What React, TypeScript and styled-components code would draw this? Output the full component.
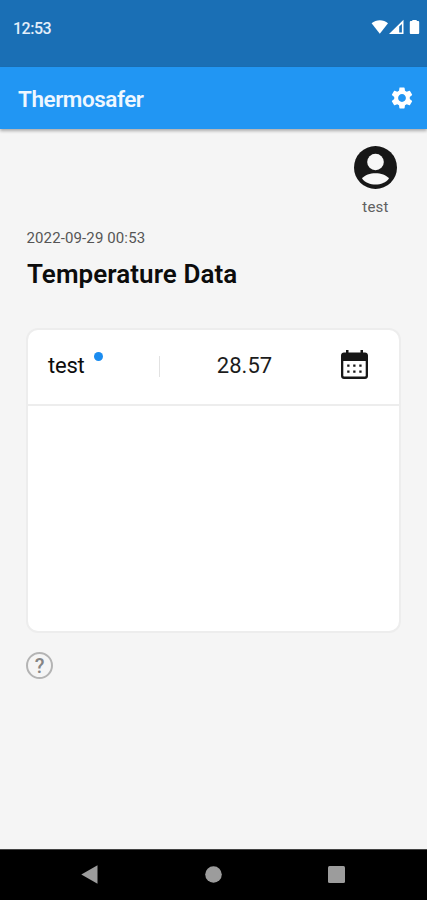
import React from "react";
import styled, { createGlobalStyle } from "styled-components";
import { MdSettings } from "react-icons/md";

const GlobalStyle = createGlobalStyle`
  *, *::before, *::after { box-sizing: border-box; }
  body { margin: 0; background: #f5f5f5; font-family: Roboto, sans-serif; }
  svg { display: block; flex: none; }
`;

const Screen = styled.div`
  display: flex;
  flex-direction: column;
  width: 427px;
  height: 900px;
  overflow: hidden;
  background: #f5f5f5;
  color: #0c0c0c;
`;

const StatusBar = styled.header`
  display: flex;
  justify-content: space-between;
  flex: none;
  height: 67px;
  padding: 19px 6px 0 13px;
  background: #1a6fb5;
`;

const Clock = styled.time`
  font-size: 16px;
  line-height: 19px;
  font-weight: 500;
  letter-spacing: -0.5px;
  color: #e3eefa;
`;

const AppBar = styled.div`
  display: flex;
  align-items: center;
  justify-content: space-between;
  flex: none;
  height: 62px;
  padding: 1px 12.5px 0 18px;
  background: #2196f3;
  color: #fff;
  box-shadow: 0 2px 3px rgba(0, 0, 0, 0.3);
`;

const AppTitle = styled.h1`
  margin: 0;
  font-size: 22.5px;
  line-height: 28px;
  font-weight: 600;
  letter-spacing: -0.45px;
  color: #eef7ff;
`;

const IconButton = styled.button`
  display: flex;
  padding: 0;
  border: 0;
  background: none;
  color: inherit;
`;

const SettingsButton = styled(IconButton)`
  margin-bottom: 1px;
`;

const Content = styled.main`
  display: flex;
  flex-direction: column;
  flex: 1;
  padding: 17px 26px 0;
`;

const Profile = styled.div`
  display: flex;
  flex-direction: column;
  align-items: center;
  align-self: flex-end;
  width: 51px;
  gap: 8px;
`;

const UserName = styled.span`
  font-size: 15px;
  line-height: 20px;
  letter-spacing: 0.2px;
  color: #606060;
`;

const Timestamp = styled.time`
  margin: 11px 0 0 0.5px;
  font-size: 15px;
  line-height: 20px;
  letter-spacing: 0.12px;
  color: #555;
`;

const Heading = styled.h2`
  margin: 10px 0 38px 1px;
  font-size: 26px;
  line-height: 32px;
  font-weight: 600;
  letter-spacing: 0.06px;
`;

const Card = styled.section`
  width: 375px;
  height: 305px;
  border: 2px solid #ededed;
  border-radius: 12px;
  background: #fff;
`;

const SensorRow = styled.div`
  display: grid;
  grid-template-columns: 132px 169px 1fr;
  align-items: center;
  height: 76px;
  padding-bottom: 2px;
  border-bottom: 2px solid #ededed;
`;

const SensorName = styled.div`
  display: flex;
  align-items: center;
  gap: 9px;
  height: 21px;
  padding-left: 20px;
  border-right: 1.5px solid #e2e2e2;
  font-size: 22px;
  line-height: 28px;
  letter-spacing: -0.2px;
`;

const OnlineDot = styled.span`
  width: 9px;
  height: 9px;
  margin-bottom: 19px;
  border-radius: 50%;
  background: #1a8cf0;
`;

const Reading = styled.div`
  text-align: center;
  font-size: 22px;
  line-height: 28px;
  color: #1c1c1c;
`;

const CalendarButton = styled(IconButton)`
  padding: 0 0 4px 12px;
`;

const HelpButton = styled.button`
  display: flex;
  align-items: center;
  justify-content: center;
  width: 27px;
  height: 27px;
  margin-top: 19px;
  padding: 0;
  border: 2px solid #b4b4b4;
  border-radius: 50%;
  background: none;
  color: #858585;
  font: 500 20px/24px Roboto, sans-serif;
`;

const NavBar = styled.nav`
  display: flex;
  align-items: center;
  justify-content: space-between;
  flex: none;
  height: 51px;
  padding: 0 82px 2px 81px;
  border-top: 1px solid #444;
  background: #000;
  color: #9c9c9c;
`;

const StatusIcons = () => (
  <svg width="50" height="16" viewBox="0 0 50 16" fill="#fff" aria-hidden="true">
    <path d="M.6 4.3C5.2.3 12.6.3 17 4.3L8.8 14.8Z" />
    <path fillRule="evenodd" d="M18 15 32.500 .8V15ZM28.200 7.500V13.400H30.900V4.900Z" />
    <path d="M41.3 1h4.400v1h1.300c.7 0 1.200.5 1.200 1.200v10.500c0 .8-.5 1.300-1.200 1.300h-7c-.7 0-1.200-.5-1.200-1.300V3.200c0-.7.5-1.200 1.200-1.200h1.300Z" />
  </svg>
);

const Avatar = () => (
  <svg width="43" height="43" viewBox="0 0 43 43" aria-hidden="true">
    <circle cx="21.500" cy="21.500" r="21.500" fill="#171717" />
    <circle cx="21.500" cy="16" r="8.300" fill="#f7f7f7" />
    <path d="M8 32.500C13.500 25.500 29.500 25.500 35 32.500 29 40.500 14 40.500 8 32.500Z" fill="#f7f7f7" />
  </svg>
);

const CalendarIcon = () => (
  <svg width="27" height="29" viewBox="0 0 27 29" fill="#171717" aria-hidden="true">
    <path
      fillRule="evenodd"
      d="M5 0h2.500v2.500h12V0H22v2.500h2c1.700 0 3 1.300 3 3V26c0 1.700-1.300 3-3 3H3c-1.700 0-3-1.300-3-3V5.500c0-1.700 1.300-3 3-3h2ZM2.300 11v14.600c0 .6.400 1 1 1h20.400c.6 0 1-.4 1-1V11Z"
    />
    <path d="M6.200 14.500h2.300v2.300H6.200ZM12.200 14.500h2.300v2.300h-2.300ZM18.300 14.500h2.300v2.300h-2.300ZM6.200 20.500h2.300v2.300H6.200ZM12.200 20.500h2.300v2.300h-2.300ZM18.300 20.500h2.300v2.300h-2.300Z" />
  </svg>
);

const BackIcon = () => (
  <svg width="17" height="19" viewBox="0 0 17 19" fill="currentColor" aria-hidden="true">
    <path d="M.3 9.500 16.500.3v18.400Z" />
  </svg>
);

const HomeIcon = () => (
  <svg width="17" height="17" viewBox="0 0 17 17" fill="currentColor" aria-hidden="true">
    <circle cx="8.500" cy="8.500" r="8.300" />
  </svg>
);

const RecentsIcon = () => (
  <svg width="17" height="17" viewBox="0 0 17 17" fill="currentColor" aria-hidden="true">
    <rect width="17" height="17" rx="1.500" />
  </svg>
);

export default function App() {
  return (
    <>
      <GlobalStyle />
      <Screen>
        <StatusBar>
          <Clock>12:53</Clock>
          <StatusIcons />
        </StatusBar>
        <AppBar>
          <AppTitle>Thermosafer</AppTitle>
          <SettingsButton aria-label="Settings">
            <MdSettings size={26} />
          </SettingsButton>
        </AppBar>
        <Content>
          <Profile>
            <Avatar />
            <UserName>test</UserName>
          </Profile>
          <Timestamp>2022-09-29 00:53</Timestamp>
          <Heading>Temperature Data</Heading>
          <Card>
            <SensorRow>
              <SensorName>
                test
                <OnlineDot />
              </SensorName>
              <Reading>28.57</Reading>
              <CalendarButton aria-label="Calendar">
                <CalendarIcon />
              </CalendarButton>
            </SensorRow>
          </Card>
          <HelpButton aria-label="Help">?</HelpButton>
        </Content>
        <NavBar>
          <IconButton aria-label="Back">
            <BackIcon />
          </IconButton>
          <IconButton aria-label="Home">
            <HomeIcon />
          </IconButton>
          <IconButton aria-label="Recents">
            <RecentsIcon />
          </IconButton>
        </NavBar>
      </Screen>
    </>
  );
}
